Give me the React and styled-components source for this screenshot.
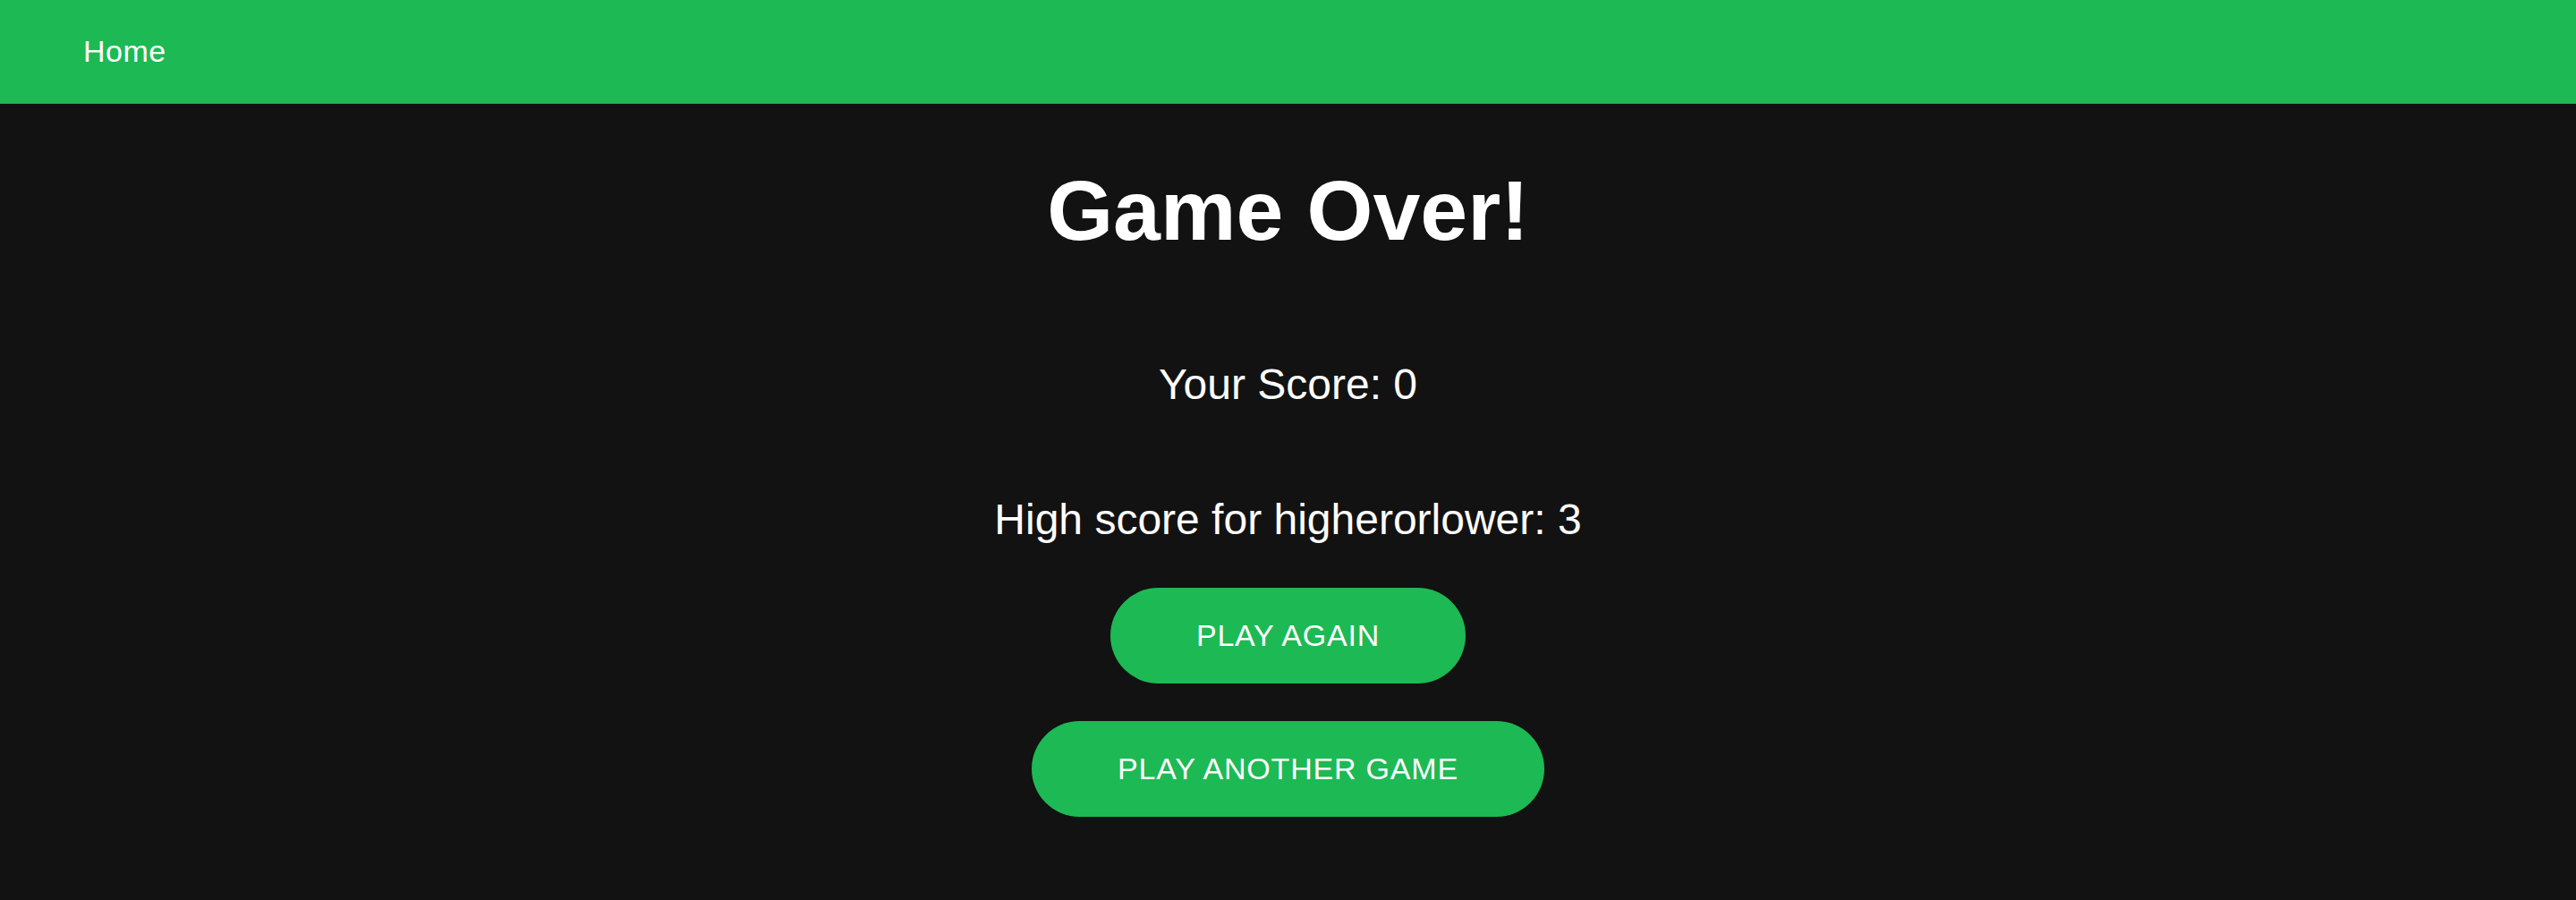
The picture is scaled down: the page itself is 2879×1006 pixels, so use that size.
import React from 'react';
import styled, { createGlobalStyle } from 'styled-components';

const GlobalStyle = createGlobalStyle`
  html, body {
    margin: 0;
    padding: 0;
    background-color: #121212;
    font-family: 'Liberation Sans', Arial, sans-serif;
  }
`;

const Page = styled.div`
  min-height: 1006px;
  background-color: #121212;
  color: white;
  display: flex;
  flex-direction: column;
`;

const NavBar = styled.nav`
  height: 116px;
  background-color: #1db954;
  display: flex;
  align-items: center;
  padding: 0 93px;
`;

const NavLink = styled.a`
  color: white;
  font-size: 34px;
  letter-spacing: 0.5px;
  text-decoration: none;
  margin-top: -2px;
`;

const Content = styled.main`
  display: flex;
  flex-direction: column;
  align-items: center;
`;

const Title = styled.h1`
  font-size: 95px;
  font-weight: 700;
  line-height: 1.2;
  margin: 62px 0 0;
`;

const ScoreLine = styled.p`
  font-size: 48px;
  line-height: 1.2;
  margin: ${(p) => p.gap}px 0 0;
`;

const ButtonStack = styled.div`
  display: flex;
  flex-direction: column;
  align-items: center;
  gap: 42px;
  margin-top: 48px;
`;

const PillButton = styled.button`
  height: 107px;
  padding: 0 96px;
  border: none;
  border-radius: 54px;
  background-color: #1db954;
  color: white;
  font-family: 'Liberation Sans', Arial, sans-serif;
  font-size: 34px;
  letter-spacing: 0.8px;
  text-transform: uppercase;
  cursor: pointer;
`;

const App = () => (
  <>
    <GlobalStyle />
    <Page>
      <NavBar>
        <NavLink href="#">Home</NavLink>
      </NavBar>
      <Content>
        <Title>Game Over!</Title>
        <ScoreLine gap={109}>Your Score: 0</ScoreLine>
        <ScoreLine gap={93}>High score for higherorlower: 3</ScoreLine>
        <ButtonStack>
          <PillButton>Play Again</PillButton>
          <PillButton>Play Another Game</PillButton>
        </ButtonStack>
      </Content>
    </Page>
  </>
);

export default App;
